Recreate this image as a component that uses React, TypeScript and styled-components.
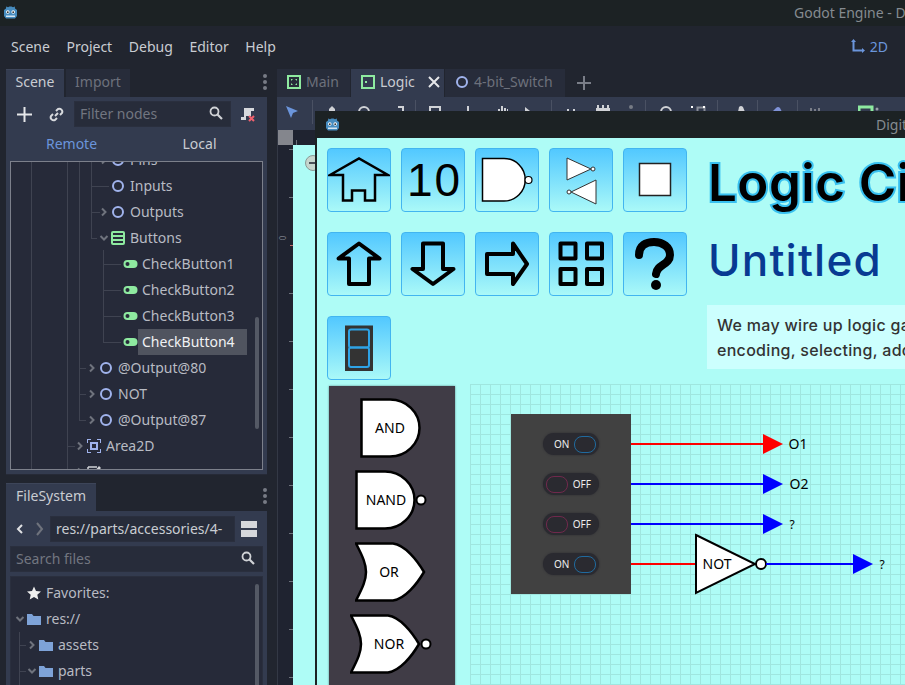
import React from 'react';
import styled, { createGlobalStyle } from 'styled-components';

const Global = createGlobalStyle`
  html, body { margin: 0; padding: 0; background: #21252f; }
  * { box-sizing: border-box; }
`;

const Page = styled.div`
  position: relative;
  width: 905px;
  height: 685px;
  overflow: hidden;
  background: #21252f;
  display: flex;
  flex-direction: column;
  font-family: "Noto Sans", sans-serif;
  font-size: 14px;
  color: #c9ccd2;
`;

const TitleBar = styled.div`
  flex: 0 0 26px;
  background: #1c2224;
  display: flex;
  align-items: center;
  padding: 0 0 2px 3px;
  color: #858b90;
  white-space: nowrap;
  overflow: hidden;
  & > * { flex: 0 0 auto; }
`;
const TitleText = styled.span`
  margin-left: 776px;
`;
const MenuBar = styled.div`
  flex: 0 0 40px;
  display: flex;
  align-items: center;
  padding: 0 17px 0 11px;
  gap: 16.6px;
`;
const MenuSpacer = styled.div`flex: 1;`;
const TwoD = styled.div`
  display: flex;
  align-items: center;
  gap: 4px;
  color: #6b95db;
`;
const Main = styled.div`
  flex: 1;
  display: flex;
  min-height: 0;
`;
const LeftDock = styled.div`
  flex: 0 0 277px;
  min-width: 0;
  min-height: 0;
  padding: 3px 10px 0 6px;
  display: flex;
  flex-direction: column;
  gap: 8px;
`;
const DockBlock = styled.div<{ $h: number }>`
  flex: 0 0 ${p => p.$h}px;
  min-height: 0;
  display: flex;
  flex-direction: column;
`;
const TabRow = styled.div`
  flex: 0 0 28px;
  display: flex;
  align-items: stretch;
`;
const DockTab = styled.div<{ $active?: boolean; $w: number }>`
  width: ${p => p.$w}px;
  display: flex;
  align-items: center;
  justify-content: center;
  padding-bottom: 4px;
  background: ${p => (p.$active ? '#333b4f' : '#272c3a')};
  color: ${p => (p.$active ? '#c9ccd2' : '#6d717c')};
  border-top: 1px solid ${p => (p.$active ? '#3d4559' : '#272c3a')};
  margin-right: 2px;
`;
const Kebab = styled.div`
  margin-left: auto;
  width: 4px;
  padding-bottom: 2px;
  display: flex;
  flex-direction: column;
  justify-content: center;
  gap: 2px;
  & > i { width: 4px; height: 4px; border-radius: 50%; background: #777b85; display: block; }
`;
const DockPanel = styled.div`
  flex: 1;
  min-height: 0;
  background: #333b4f;
  padding: 4px;
  display: flex;
  flex-direction: column;
  border-bottom: 1px solid #262a37;
`;
const ToolRow = styled.div<{ $mt?: number }>`
  flex: 0 0 26px;
  display: flex;
  align-items: center;
  margin-top: ${p => p.$mt ?? 0}px;
`;
const IconSlot = styled.div<{ $w: number }>`
  flex: 0 0 ${p => p.$w}px;
  display: flex;
  align-items: center;
  justify-content: center;
`;
const Field = styled.div<{ $w?: number }>`
  ${p => (p.$w ? `flex: 0 0 ${p.$w}px;` : 'flex: 1;')}
  height: 26px;
  background: #272c3a;
  border: 1px solid #2a2f3e;
  display: flex;
  align-items: center;
  justify-content: space-between;
  padding: 0 7px 2px 5px;
  color: #727680;
  white-space: nowrap;
  overflow: hidden;
`;
const SearchField = styled(Field)`
  flex: 0 0 26px;
  margin-top: 4px;
`;
const FieldValue = styled.span`color: #c9ccd2;`;
const ModeRow = styled.div`
  flex: 0 0 34px;
  display: grid;
  grid-template-columns: 123px 133px;
  align-items: center;
  justify-items: center;
  padding-bottom: 2px;
`;
const Mode = styled.span<{ $on?: boolean }>`
  color: ${p => (p.$on ? '#6b95db' : '#c9ccd2')};
`;
const Tree = styled.div`
  position: relative;
  flex: 1;
  min-height: 0;
  overflow: hidden;
  background: #262a39;
  border: 1px solid #7c808b;
`;
const FileTree = styled(Tree)`
  border: 1px solid #2a2f3e;
  margin-top: 4px;
`;
const TreeInner = styled.div<{ $top: number }>`
  margin-top: ${p => p.$top}px;
`;
const Row = styled.div<{ $indent: number }>`
  position: relative;
  height: 26px;
  line-height: 26px;
  display: flex;
  align-items: center;
  padding-left: ${p => p.$indent}px;
  white-space: nowrap;
  color: #b8bbc3;
`;
const Arrow = styled.span`
  flex: 0 0 12px;
  display: flex;
  align-items: center;
  justify-content: center;
`;
const RowIcon = styled.span`
  flex: 0 0 16px;
  display: flex;
  align-items: center;
  justify-content: center;
  margin-right: 4px;
`;
const RowLabel = styled.span<{ $sel?: boolean }>`
  ${p => p.$sel && `
    color: #f0f1f3;
    background: #50545f;
    margin-left: -4px;
    padding-left: 4px;
    width: 109px;
    height: 26px;
  `}
`;
const Guide = styled.div<{ $x: number; $y: number; $h: number }>`
  position: absolute;
  left: ${p => p.$x}px;
  top: ${p => p.$y}px;
  width: 1px;
  height: ${p => p.$h}px;
  background: #3f4351;
`;
const Branch = styled.div<{ $x: number; $y: number; $w: number }>`
  position: absolute;
  left: ${p => p.$x}px;
  top: ${p => p.$y}px;
  height: 1px;
  width: ${p => p.$w}px;
  background: #3f4351;
`;
const ScrollThumb = styled.div<{ $y: number; $h: number; $x: number }>`
  position: absolute;
  left: ${p => p.$x}px;
  top: ${p => p.$y}px;
  width: 4px;
  height: ${p => p.$h}px;
  border-radius: 2px;
  background: #545965;
`;

const Editor = styled.div`
  position: relative;
  flex: 1;
  display: flex;
  flex-direction: column;
  min-width: 0;
  padding-top: 3px;
`;
const EditorTabs = styled.div`
  flex: 0 0 28px;
  display: flex;
  align-items: stretch;
`;
const EditorTab = styled.div<{ $active?: boolean; $w: number }>`
  flex: 0 0 ${p => p.$w}px;
  display: flex;
  align-items: center;
  padding: 0 0 3px 10px;
  gap: 5px;
  background: ${p => (p.$active ? '#333b4f' : '#272c3a')};
  color: ${p => (p.$active ? '#c9ccd2' : '#6d717c')};
  margin-right: 1px;
`;
const CloseX = styled.span`
  margin-left: 8px;
  display: flex;
`;
const Plus = styled.div`
  width: 36px;
  display: flex;
  align-items: center;
  justify-content: center;
`;
const Toolbar = styled.div`
  flex: 0 0 33px;
  background: #333b4f;
  display: flex;
  align-items: flex-start;
  padding-top: 7px;
  overflow: hidden;
`;
const ToolIcon = styled.svg<{ $ml: number }>`
  flex: 0 0 16px;
  width: 16px;
  height: 16px;
  margin-left: ${p => p.$ml}px;
`;
const ToolSep = styled.div<{ $ml: number }>`
  flex: 0 0 1px;
  height: 24px;
  margin-top: -4px;
  margin-left: ${p => p.$ml}px;
  background: #4a5163;
`;
const Viewport = styled.div`
  flex: 1;
  display: grid;
  grid-template-columns: 15px 1fr;
  grid-template-rows: 15px 1fr;
  background: #21252f;
  border-left: 1px solid #333845;
`;
const RulerCorner = styled.div`background: #84868d;`;
const RulerTop = styled.div`
  background-color: #1f2330;
  background-image: linear-gradient(#6d717b, #6d717b);
  background-size: 1px 5px;
  background-position: 3px 10px;
  background-repeat: no-repeat;
`;
const RulerLeft = styled.div`
  position: relative;
  background-color: #1f2330;
  overflow: hidden;
`;
const RulerTick = styled.div<{ $y: number }>`
  position: absolute;
  right: 0;
  top: ${p => p.$y}px;
  width: 4px;
  height: 1px;
  background: #6d717b;
`;
const RulerOrigin = styled.div`
  position: absolute;
  right: 0;
  top: 100px;
  width: 3px;
  height: 1px;
  background: #c06a6a;
`;
const RulerZero = styled.span`
  position: absolute;
  left: 3px;
  top: 88px;
  font-size: 8px;
  line-height: 10px;
  color: #7a7e88;
  transform: rotate(-90deg);
`;
const Canvas = styled.div`
  position: relative;
  background: #aefcf6;
`;
const ZoomOut = styled.div`
  position: absolute;
  left: 12px;
  top: 10px;
  width: 16px;
  height: 16px;
  border-radius: 50%;
  background: #c6d6ce;
  border: 1px solid #8b9a96;
  display: flex;
  align-items: center;
  justify-content: center;
  & > i { width: 9px; height: 2px; background: #4a5058; display: block; }
`;

/* Floating game window */
const GameWindow = styled.div`
  position: absolute;
  left: 38px;
  top: 45px;
  width: 640px;
  height: 620px;
  background: #1c2224;
  padding: 0 0 0 2px;
  display: flex;
  flex-direction: column;
  overflow: hidden;
`;
const WinTitle = styled.div`
  flex: 0 0 27px;
  display: flex;
  align-items: center;
  color: #858b90;
  padding-left: 8px;
  white-space: nowrap;
  & > * { flex: 0 0 auto; }
`;
const WinTitleText = styled.span`
  margin-left: 536px;
`;
const WinBody = styled.div`
  flex: 1;
  background: #aefcf6;
  display: flex;
  flex-direction: column;
  min-height: 0;
  padding: 10px 0 0 10px;
`;
const Top = styled.div`
  flex: 0 0 236px;
  display: flex;
`;
const BtnGrid = styled.div`
  flex: 0 0 381px;
  display: grid;
  grid-template-columns: repeat(5, 64px);
  grid-auto-rows: 64px;
  column-gap: 10px;
  row-gap: 20px;
`;
const PicButton = styled.div`
  width: 64px;
  height: 64px;
  border: 1px solid #42b5f0;
  border-radius: 4px;
  background: linear-gradient(#52c8ff, #aaf9f8);
  display: flex;
  align-items: center;
  justify-content: center;
`;
const Ten = styled.span`
  font-family: "Liberation Sans", sans-serif;
  font-size: 46px;
  letter-spacing: 2px;
  margin-left: 3px;
  color: #000;
  line-height: 1;
`;
const Heading = styled.div`
  display: flex;
  flex-direction: column;
  white-space: nowrap;
`;
const H1 = styled.div`
  font-family: Inter, sans-serif;
  font-weight: 600;
  font-size: 51px;
  letter-spacing: 0.5px;
  line-height: 62px;
  margin-top: 4px;
  color: #000;
  -webkit-text-stroke: 4px #38c0f0;
  paint-order: stroke fill;
`;
const H2 = styled.div`
  font-family: Inter, sans-serif;
  font-weight: 500;
  font-size: 44px;
  letter-spacing: 1.2px;
  line-height: 50px;
  margin-top: 21px;
  color: #083a92;
`;
const Note = styled.div`
  margin: 20px 0 0 -1px;
  width: 300px;
  height: 64px;
  padding: 8px 10px 0;
  background: #ccfffe;
  font-family: Inter, sans-serif;
  font-weight: 500;
  font-size: 16px;
  letter-spacing: 0.3px;
  line-height: 25px;
  color: #333;
`;
const Bottom = styled.div`
  flex: 1;
  display: flex;
  min-height: 0;
`;
const Palette = styled.div`
  flex: 0 0 126px;
  margin-left: 2px;
  margin-top: 2px;
  height: 320px;
  background: #403c46;
  box-shadow: 0 0 2px #5b8a8a;
  display: flex;
  flex-direction: column;
  padding-top: 12px;
  gap: 12px;
`;
const GateSvg = styled.svg<{ $ml: number }>`
  display: block;
  flex: 0 0 auto;
  margin-left: ${p => p.$ml}px;
`;
const Board = styled.div`
  position: relative;
  flex: 1;
  margin-left: 15px;
  background-color: #aefcf6;
  background-image:
    linear-gradient(to right, #9fe6df 1px, transparent 1px),
    linear-gradient(to bottom, #9fe6df 1px, transparent 1px);
  background-size: 10px 10px;
`;
const SwitchBox = styled.div`
  position: absolute;
  left: 41px;
  top: 30px;
  width: 120px;
  height: 180px;
  background: #414141;
  display: flex;
  flex-direction: column;
  align-items: center;
  padding-top: 19px;
  gap: 18px;
`;
const Toggle = styled.div<{ $on: boolean }>`
  flex: 0 0 22px;
  width: 56px;
  border-radius: 11px;
  background: #2a2a30;
  box-shadow: 0 0 2px #2a2a30;
  display: flex;
  flex-direction: ${p => (p.$on ? 'row' : 'row-reverse')};
  align-items: center;
  justify-content: space-between;
  padding: ${p => (p.$on ? '0 3px 0 11px' : '0 8px 0 3px')};
  font-family: "Noto Sans", sans-serif;
  font-size: 10px;
  color: #eee;
`;
const Knob = styled.span<{ $on: boolean }>`
  width: 22px;
  height: 17px;
  border-radius: 8px;
  border: 1px solid ${p => (p.$on ? '#206a9e' : '#70294c')};
`;
const Wires = styled.svg`
  position: absolute;
  left: 0;
  top: 0;
`;

const Chevron = ({ dir, c = '#6f737d' }: { dir: 'r' | 'd' | 'l'; c?: string }) => (
  <svg width="10" height="10" viewBox="0 0 10 10">
    <path
      d={dir === 'r' ? 'M3 1.5 L6.5 5 L3 8.5' : dir === 'd' ? 'M1.5 3 L5 6.5 L8.5 3' : 'M7 1 L3 5 L7 9'}
      fill="none"
      stroke={c}
      strokeWidth="2"
    />
  </svg>
);
const Ring = () => (
  <svg width="14" height="14" viewBox="0 0 14 14">
    <circle cx="7" cy="7" r="5" fill="none" stroke="#a0b3ec" strokeWidth="2" />
  </svg>
);
const Pill = () => (
  <svg width="15" height="10" viewBox="0 0 15 10">
    <rect x="0.5" y="1" width="14" height="8" rx="4" fill="#8eeaa0" />
    <circle cx="4.5" cy="5" r="2" fill="#262a39" />
  </svg>
);
const Folder = () => (
  <svg width="14" height="12" viewBox="0 0 14 12">
    <path d="M0 1 H5 L6.5 3 H14 V12 H0 Z" fill="#7ea3d8" />
  </svg>
);
const Search = () => (
  <svg width="14" height="14" viewBox="0 0 14 14">
    <circle cx="5.5" cy="5.5" r="4" fill="none" stroke="#d0d2d6" strokeWidth="1.8" />
    <path d="M8.5 8.5 L13 13" stroke="#d0d2d6" strokeWidth="2.2" />
  </svg>
);
const Logo = () => (
  <svg width="15" height="15" viewBox="0 0 15 15">
    <path d="M1 5 L3 3.500 L3.200 1.500 L5 2.200 L6.500 1.500 L8.500 1.500 L10 2.200 L11.800 1.500 L12 3.500 L14 5 L14 11 L12 13.500 L3 13.500 L1 11 Z" fill="#478cbf" />
    <circle cx="4.800" cy="7" r="1.800" fill="#fff" />
    <circle cx="10.200" cy="7" r="1.800" fill="#fff" />
    <circle cx="4.800" cy="7.200" r="0.900" fill="#333" />
    <circle cx="10.200" cy="7.200" r="0.900" fill="#333" />
    <path d="M3 10.500 H12 V12 H3 Z" fill="#d6e6f2" />
  </svg>
);
const SceneGlyph = ({ kind }: { kind: 'main' | 'logic' }) => (
  <svg width="14" height="14" viewBox="0 0 14 14">
    <rect x="1" y="1" width="12" height="12" fill="none" stroke="#8eeaa0" strokeWidth="2" />
    {kind === 'main' ? (
      <path d="M4 4 L6 4 L4 6 Z M10 4 L10 6 L8 4 Z M4 10 L4 8 L6 10 Z M10 10 L8 10 L10 8 Z" fill="#8eeaa0" />
    ) : (
      <rect x="4" y="6" width="2" height="2" fill="#8eeaa0" />
    )}
  </svg>
);

const S = { fill: 'none', stroke: '#000', strokeWidth: 4, strokeLinejoin: 'round' as const };
const IconBox = ({ children }: { children: React.ReactNode }) => (
  <svg width="62" height="62" viewBox="0 0 62 62">{children}</svg>
);
const buttons: React.ReactNode[] = [
  <IconBox key="home"><path d="M2 26 L31 9.500 L60 26 H47 V51.500 H37 V41.500 H24 V51.500 H15 V26 Z" fill="none" stroke="#000" strokeWidth="2.500" /></IconBox>,
  <Ten key="ten">10</Ten>,
  <IconBox key="nand">
    <path d="M6.500 9.500 H28 A21 21 0 0 1 28 52 H6.500 Z" fill="#fff" stroke="#000" strokeWidth="1.500" />
    <circle cx="52.500" cy="31" r="3.500" fill="#fff" stroke="#000" strokeWidth="1.200" />
  </IconBox>,
  <IconBox key="not">
    <path d="M17 9 L41 20 L17 31 Z" fill="#fff" stroke="#333" />
    <circle cx="43" cy="20" r="2" fill="#fff" stroke="#333" />
    <path d="M46 31 L21 43 L46 55 Z" fill="#fff" stroke="#333" />
    <circle cx="19" cy="43" r="2" fill="#fff" stroke="#333" />
  </IconBox>,
  <IconBox key="sq"><rect x="15.500" y="14.500" width="31" height="32" fill="#fff" stroke="#222" strokeWidth="1.500" /></IconBox>,
  <IconBox key="up"><path d="M31 10.500 L51.500 25.500 H41 V51 H21 V25.500 H10.500 Z" {...S} /></IconBox>,
  <IconBox key="dn"><path d="M21 10.500 H41 V36 H51.500 L31 51 L10.500 36 H21 Z" {...S} /></IconBox>,
  <IconBox key="rt"><path d="M11 21 H37 V10.500 L51 31 L37 51 V41 H11 Z" {...S} /></IconBox>,
  <IconBox key="grid">
    <rect x="10.500" y="10.500" width="15" height="15" {...S} />
    <rect x="37" y="10.500" width="15" height="15" {...S} />
    <rect x="10.500" y="36" width="15" height="15" {...S} />
    <rect x="37" y="36" width="15" height="15" {...S} />
  </IconBox>,
  <IconBox key="q"><path d="M15 22 C15 12 22 9 30 9 C39 9 46 14 46 22 C46 32 33 31 32 41" fill="none" stroke="#000" strokeWidth="8" strokeLinecap="round" /><circle cx="32" cy="52" r="5" fill="#000" /></IconBox>,
  <IconBox key="seg">
    <rect x="17" y="8.500" width="28" height="45.500" fill="#333" />
    <rect x="21" y="12.500" width="20" height="18" rx="2" fill="none" stroke="#2ea3e6" strokeWidth="2" />
    <rect x="21" y="30.500" width="20" height="19.500" rx="2" fill="none" stroke="#2ea3e6" strokeWidth="2" />
  </IconBox>,
];

const gateBody = 'M1.500 1.500 H30 A29.500 28.500 0 0 1 30 58.500 H1.500 Z';
const orBody = 'M1 1.500 H38 C50 3 62 18 69 30 C62 42 50 57 38 58.500 H1 C8 45 11 38 11 30 C11 22 8 15 1 1.500 Z';
const GateText = styled.text`
  font-family: "Noto Sans", sans-serif;
  font-size: 14px;
  fill: #000;
  text-anchor: middle;
`;
const SmallText = styled(GateText)`
  font-size: 12px;
`;
const Gate = ({ name, ml, w, d, tx, bubble }: { name: string; ml: number; w: number; d: string; tx: number; bubble?: number }) => (
  <GateSvg $ml={ml} width={w} height={60} viewBox={`0 0 ${w} 60`}>
    <path d={d} fill="#fff" stroke="#000" strokeWidth="2.500" />
    {bubble ? <circle cx={bubble} cy={30} r={4.500} fill="#fff" stroke="#000" strokeWidth="2" /> : null}
    <GateText x={tx} y={35}>{name}</GateText>
  </GateSvg>
);

const rows = [
  { i: 102, arrow: 'r', icon: <Ring />, t: 'Pins' },
  { i: 102, icon: <Ring />, t: 'Inputs' },
  { i: 102, arrow: 'r', icon: <Ring />, t: 'Outputs' },
  { i: 102, arrow: 'd', icon: <svg width="14" height="14" viewBox="0 0 14 14"><rect x="1" y="1" width="12" height="12" rx="1" fill="none" stroke="#8eeaa0" strokeWidth="2" /><path d="M1 5 H13 M1 9 H13" stroke="#8eeaa0" strokeWidth="2" /></svg>, t: 'Buttons' },
  { i: 114, icon: <Pill />, t: 'CheckButton1' },
  { i: 114, icon: <Pill />, t: 'CheckButton2' },
  { i: 114, icon: <Pill />, t: 'CheckButton3' },
  { i: 114, icon: <Pill />, t: 'CheckButton4', sel: true },
  { i: 90, arrow: 'r', icon: <Ring />, t: '@Output@80' },
  { i: 90, arrow: 'r', icon: <Ring />, t: 'NOT' },
  { i: 90, arrow: 'r', icon: <Ring />, t: '@Output@87' },
  { i: 78, arrow: 'r', icon: <svg width="14" height="14" viewBox="0 0 14 14"><path d="M0 4 V0 H4 M10 0 H14 V4 M14 10 V14 H10 M4 14 H0 V10" fill="none" stroke="#a0b3ec" strokeWidth="2" /><rect x="4" y="4" width="6" height="6" fill="none" stroke="#a0b3ec" strokeWidth="2" /></svg>, t: 'Area2D' },
  { i: 78, arrow: 'r', icon: <svg width="14" height="14" viewBox="0 0 14 14"><path d="M1 2 H10 M1 2 V13 H13 V6" fill="none" stroke="#d0d2d6" strokeWidth="1.500" /><path d="M6 8 L12 1 L14 3 L8 9 Z" fill="#d0d2d6" /></svg>, t: '' },
] as const;

const rulerTicks = [4, 52, 148, 196, 244, 292, 340, 388, 436, 484, 532];

const W = '#d0d2d6';
const toolItems: { ml: number; sep?: boolean; g?: React.ReactNode }[] = [
  { ml: 7, g: <path d="M2 2 L14 7 L9 9 L7 14 Z" fill="#6b95db" /> },
  { ml: 12, sep: true },
  { ml: 11, g: <path d="M8 2 L11 5 V7 H5 V5 Z" fill={W} /> },
  { ml: 16, g: <circle cx="8" cy="8" r="5" fill="none" stroke={W} strokeWidth="2" /> },
  { ml: 18, g: <path d="M8 3 H13 V7" fill="none" stroke={W} strokeWidth="2" /> },
  { ml: 9, sep: true },
  { ml: 10, g: <rect x="4" y="3" width="10" height="10" fill="none" stroke={W} strokeWidth="2" /> },
  { ml: 18, g: <rect x="7" y="2" width="2" height="6" fill={W} /> },
  { ml: 19, g: <path d="M3 5 H5 V8 H3 Z M6 2 H8 V8 H6 Z M9 4 H11 V8 H9 Z M12 5 H13 V8 H12 Z" fill={W} /> },
  { ml: 8, g: <path d="M6 3 L11 7 H6 Z" fill={W} /> },
  { ml: 16, sep: true },
  { ml: 12, g: <path d="M3 5 H5 V8 H3 Z M9 5 H11 V8 H9 Z" fill={W} /> },
  { ml: 16, g: <path d="M1 1 H3 V4 H6 V1 H8 V4 H11 V1 H13 V4 H14 V8 H0 V4 H1 Z" fill={W} /> },
  { ml: 11, g: <circle cx="8" cy="3" r="2" fill="#777b85" /> },
  { ml: 6, sep: true },
  { ml: 12, g: <circle cx="8" cy="8" r="5" fill="none" stroke={W} strokeWidth="2" /> },
  { ml: 17, g: <><rect x="0" y="2" width="2" height="2" fill="#fff" /><rect x="6.500" y="3.500" width="7" height="7" fill="none" stroke="#8a8e98" strokeWidth="2" /><rect x="12" y="2" width="2" height="2" fill="#fff" /></> },
  { ml: 10, sep: true },
  { ml: 15, g: <path d="M5 8 L6 3 Q8 1 10 3 L12 8 Z" fill={W} /> },
  { ml: 8, sep: true },
  { ml: 11, g: <path d="M3 8 L7 4 Q9 2 11 4 L13 8 Z" fill="#8093d8" /> },
  { ml: 12, sep: true },
  { ml: 10, g: <path d="M2 4 H4 V8 H2 Z M6 5 H8 V8 H6 Z M10 4 H12 V8 H10 Z" fill="#7a7e88" /> },
  { ml: 34, g: <rect x="1" y="3" width="13" height="12" fill="none" stroke="#8eeaa0" strokeWidth="3" /> },
  { ml: -8, g: <circle cx="11" cy="5" r="1.500" fill="#9a9ea8" /> },
];

export default function App() {
  return (
    <Page>
      <Global />
      <TitleBar>
        <Logo />
        <TitleText>Godot Engine - Digital Logic</TitleText>
      </TitleBar>
      <MenuBar>
        <span>Scene</span><span>Project</span><span>Debug</span><span>Editor</span><span>Help</span>
        <MenuSpacer />
        <TwoD>
          <svg width="16" height="16" viewBox="0 0 16 16"><path d="M3.500 1 L6 4 H4.500 V11.500 H12 V10 L15 12.500 L12 15 V13.500 H2.500 V4 H1 Z" fill="#6b95db" /></svg>
          2D
        </TwoD>
      </MenuBar>
      <Main>
        <LeftDock>
          <DockBlock $h={406}>
            <TabRow>
              <DockTab $active $w={58}>Scene</DockTab>
              <DockTab $w={64}>Import</DockTab>
              <Kebab><i /><i /><i /></Kebab>
            </TabRow>
            <DockPanel>
              <ToolRow>
                <IconSlot $w={28}><svg width="15" height="15" viewBox="0 0 15 15"><path d="M7.500 0 V15 M0 7.500 H15" stroke="#e6e7ea" strokeWidth="2" /></svg></IconSlot>
                <IconSlot $w={36}><svg width="15" height="15" viewBox="0 0 15 15"><path d="M6 9 L9 6" stroke="#d8dade" strokeWidth="2" /><path d="M7 4 L9 2 A3 3 0 0 1 13 6 L11 8 M8 11 L6 13 A3 3 0 0 1 2 9 L4 7" fill="none" stroke="#d8dade" strokeWidth="2" /></svg></IconSlot>
                <Field $w={157}>Filter nodes <Search /></Field>
                <IconSlot $w={32}><svg width="15" height="15" viewBox="0 0 15 15"><path d="M4 1 H14 V4 H11 V9 H6 V13 H1 V10 H4 Z" fill="#d6d8dc" /><path d="M9 9 L14 14 M14 9 L9 14" stroke="#f0616e" strokeWidth="2" /></svg></IconSlot>
              </ToolRow>
              <ModeRow>
                <Mode $on>Remote</Mode>
                <Mode>Local</Mode>
              </ModeRow>
              <Tree>
                <Guide $x={20} $y={0} $h={307} />
                <Guide $x={56} $y={0} $h={307} />
                <Guide $x={68} $y={0} $h={259} />
                <Guide $x={80} $y={0} $h={77} />
                <Branch $x={80} $y={24} $w={18} />
                <Branch $x={80} $y={50} $w={9} />
                <Branch $x={80} $y={76} $w={6} />
                <Guide $x={92} $y={88} $h={93} />
                <Branch $x={92} $y={102} $w={18} />
                <Branch $x={92} $y={128} $w={18} />
                <Branch $x={92} $y={154} $w={18} />
                <Branch $x={92} $y={180} $w={18} />
                <Branch $x={68} $y={206} $w={7} />
                <Branch $x={68} $y={232} $w={7} />
                <Branch $x={68} $y={258} $w={7} />
                <Branch $x={56} $y={284} $w={8} />
                <TreeInner $top={-15}>
                  {rows.map((r, i) => (
                    <Row key={i} $indent={r.i - 15}>
                      <Arrow>{'arrow' in r ? <Chevron dir={r.arrow} /> : null}</Arrow>
                      <RowIcon>{r.icon}</RowIcon>
                      <RowLabel $sel={'sel' in r}>{r.t}</RowLabel>
                    </Row>
                  ))}
                </TreeInner>
                <ScrollThumb $x={244} $y={155} $h={112} />
              </Tree>
            </DockPanel>
          </DockBlock>
          <DockBlock $h={240}>
            <TabRow>
              <DockTab $active $w={90}>FileSystem</DockTab>
              <Kebab><i /><i /><i /></Kebab>
            </TabRow>
            <DockPanel>
              <ToolRow $mt={1}>
                <IconSlot $w={20}><Chevron dir="l" c="#e0e1e4" /></IconSlot>
                <IconSlot $w={20}><svg width="10" height="14" viewBox="0 0 10 14"><path d="M2 1 L7 7 L2 13" fill="none" stroke="#6f737d" strokeWidth="2" /></svg></IconSlot>
                <Field $w={185}><FieldValue>res://parts/accessories/4-</FieldValue></Field>
                <IconSlot $w={28}><svg width="16" height="16" viewBox="0 0 16 16"><path d="M0 0 H16 V7 H0 Z M0 9 H16 V16 H0 Z" fill="#d6d8dc" /></svg></IconSlot>
              </ToolRow>
              <SearchField>Search files <Search /></SearchField>
              <FileTree>
                <Guide $x={8} $y={55} $h={60} />
                <Branch $x={8} $y={68} $w={7} />
                <Branch $x={8} $y={94} $w={7} />
                <TreeInner $top={3}>
                  <Row $indent={15}><RowIcon>
                    <svg width="14" height="14" viewBox="0 0 14 14"><path d="M7 0.500 L9 5 L14 5.500 L10.300 8.800 L11.300 13.500 L7 11 L2.700 13.500 L3.700 8.800 L0 5.500 L5 5 Z" fill="#eee" /></svg>
                  </RowIcon>Favorites:</Row>
                  <Row $indent={3}><Arrow><Chevron dir="d" /></Arrow><RowIcon><Folder /></RowIcon>res://</Row>
                  <Row $indent={15}><Arrow><Chevron dir="r" /></Arrow><RowIcon><Folder /></RowIcon>assets</Row>
                  <Row $indent={15}><Arrow><Chevron dir="d" /></Arrow><RowIcon><Folder /></RowIcon>parts</Row>
                </TreeInner>
                <ScrollThumb $x={244} $y={7} $h={120} />
              </FileTree>
            </DockPanel>
          </DockBlock>
        </LeftDock>
        <Editor>
          <EditorTabs>
            <EditorTab $w={73}><SceneGlyph kind="main" />Main</EditorTab>
            <EditorTab $active $w={93}><SceneGlyph kind="logic" />Logic
              <CloseX><svg width="12" height="12" viewBox="0 0 12 12"><path d="M1 1 L11 11 M11 1 L1 11" stroke="#e6e7ea" strokeWidth="2" /></svg></CloseX>
            </EditorTab>
            <EditorTab $w={120}><Ring />4-bit_Switch</EditorTab>
            <Plus><svg width="14" height="14" viewBox="0 0 14 14"><path d="M7 0 V14 M0 7 H14" stroke="#7a7e88" strokeWidth="2" /></svg></Plus>
          </EditorTabs>
          <Toolbar>
            {toolItems.map((t, i) =>
              t.sep ? (
                <ToolSep key={i} $ml={t.ml} />
              ) : (
                <ToolIcon key={i} $ml={t.ml} viewBox="0 0 16 16">{t.g}</ToolIcon>
              ),
            )}
          </Toolbar>
          <Viewport>
            <RulerCorner />
            <RulerTop />
            <RulerLeft>
              {rulerTicks.map(y => <RulerTick key={y} $y={y} />)}
              <RulerOrigin />
              <RulerZero>0</RulerZero>
            </RulerLeft>
            <Canvas>
              <ZoomOut><i /></ZoomOut>
            </Canvas>
          </Viewport>
          <GameWindow>
            <WinTitle>
              <Logo />
              <WinTitleText>Digital Logic</WinTitleText>
            </WinTitle>
            <WinBody>
              <Top>
                <BtnGrid>
                  {buttons.map((b, i) => <PicButton key={i}>{b}</PicButton>)}
                </BtnGrid>
                <Heading>
                  <H1>Logic Circuits</H1>
                  <H2>Untitled</H2>
                  <Note>We may wire up logic gates<br />encoding, selecting, adding</Note>
                </Heading>
              </Top>
              <Bottom>
                <Palette>
                  <Gate name="AND" ml={31} w={62} d={gateBody} tx={30} />
                  <Gate name="NAND" ml={26} w={74} d={gateBody} tx={31} bubble={66} />
                  <Gate name="OR" ml={26} w={72} d={orBody} tx={34} />
                  <Gate name="NOR" ml={21} w={84} d={orBody} tx={39} bubble={76} />
                </Palette>
                <Board>
                  <Wires width={440} height={300} viewBox="0 0 440 300">
                    <path d="M161 60 H296" stroke="#f00" strokeWidth="2" />
                    <path d="M161 100 H296" stroke="#00f" strokeWidth="2" />
                    <path d="M161 140 H296" stroke="#00f" strokeWidth="2" />
                    <path d="M161 180 H226" stroke="#f00" strokeWidth="2" />
                    <path d="M293 50 L313 60 L293 70 Z" fill="#f00" />
                    <path d="M293 90 L313 100 L293 110 Z" fill="#00f" />
                    <path d="M293 130 L313 140 L293 150 Z" fill="#00f" />
                    <path d="M226 151 L285 180 L226 209 Z" fill="#fff" stroke="#000" strokeWidth="2" />
                    <circle cx="291" cy="180" r="5" fill="#fff" stroke="#000" strokeWidth="2" />
                    <path d="M296 180 H385" stroke="#00f" strokeWidth="2" />
                    <path d="M383 170 L403 180 L383 190 Z" fill="#00f" />
                    <GateText x={247} y={185}>NOT</GateText>
                    <GateText x={328} y={65}>O1</GateText>
                    <GateText x={329} y={105}>O2</GateText>
                    <SmallText x={322} y={145}>?</SmallText>
                    <SmallText x={412} y={185}>?</SmallText>
                  </Wires>
                  <SwitchBox>
                    <Toggle $on><span>ON</span><Knob $on /></Toggle>
                    <Toggle $on={false}><span>OFF</span><Knob $on={false} /></Toggle>
                    <Toggle $on={false}><span>OFF</span><Knob $on={false} /></Toggle>
                    <Toggle $on><span>ON</span><Knob $on /></Toggle>
                  </SwitchBox>
                </Board>
              </Bottom>
            </WinBody>
          </GameWindow>
        </Editor>
      </Main>
    </Page>
  );
}
